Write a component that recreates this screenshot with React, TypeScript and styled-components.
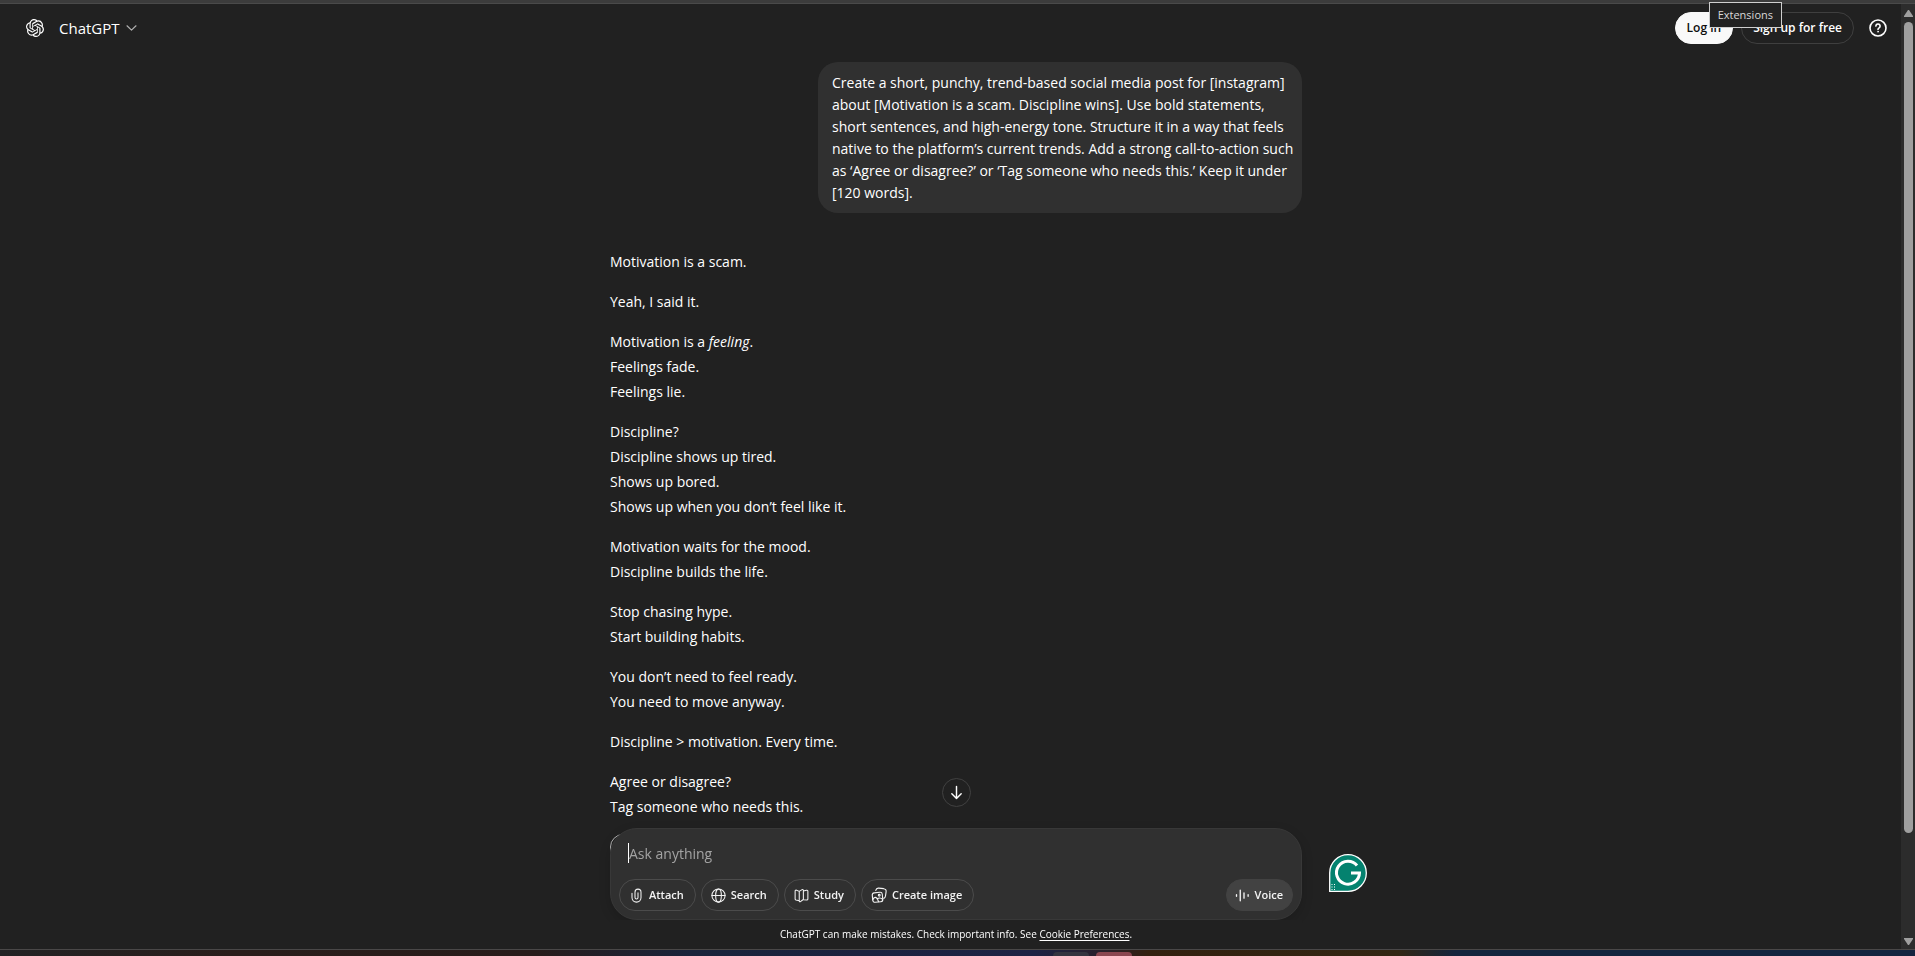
import React from "react";
import styled, { createGlobalStyle, css } from "styled-components";
import { SiOpenai } from "react-icons/si";

const GlobalStyle = createGlobalStyle`
  * { box-sizing: border-box; }
  body {
    margin: 0;
    background: #212121;
    color: #ffffff;
    font-family: "Open Sans", "Noto Sans", sans-serif;
    font-size: 14px;
  }
  button, input { font-family: inherit; color: inherit; }
`;

const Window = styled.div`
  display: flex;
  flex-direction: column;
  height: 100vh;
  overflow: hidden;
`;

const BrowserEdge = styled.div`
  flex: none;
  height: 4px;
  background: #3c3c3c;
  border-bottom: 1px solid #4a4a4a;
`;

const Page = styled.div`
  flex: 1;
  min-height: 0;
  display: flex;
`;

const Content = styled.div`
  flex: 1;
  min-width: 0;
  display: flex;
  flex-direction: column;
`;

const Header = styled.header`
  flex: none;
  display: flex;
  align-items: center;
  justify-content: space-between;
  height: 48px;
  padding: 0 13px 0 26px;
`;

const Brand = styled.div`
  display: flex;
  align-items: center;
  gap: 15px;
`;

const ModelButton = styled.button`
  display: flex;
  align-items: center;
  gap: 6px;
  padding: 0;
  border: 0;
  background: none;
  font-size: 15px;
  line-height: 20px;
`;

const HeaderActions = styled.div`
  display: flex;
  align-items: center;
  gap: 8px;
`;

const AccountButton = styled.button<{ $primary?: boolean }>`
  height: 32px;
  padding: 0 11px;
  border-radius: 16px;
  border: 1px solid ${(p) => (p.$primary ? "#f9f9f9" : "#3f3f3f")};
  background: ${(p) => (p.$primary ? "#f9f9f9" : "transparent")};
  color: ${(p) => (p.$primary ? "#0d0d0d" : "#ffffff")};
  font-size: 12px;
  font-weight: 600;
  line-height: 20px;
`;

const HelpButton = styled.button`
  display: flex;
  padding: 0;
  margin-left: 6px;
  border: 0;
  background: none;
`;

const Tooltip = styled.div`
  position: absolute;
  top: 2px;
  right: 133px;
  padding: 3px 8px;
  border: 1px solid #cfcfcf;
  background: #222222;
  color: #d8d8d8;
  font-size: 11px;
  line-height: 18px;
`;

const Scroller = styled.main`
  flex: 1;
  min-height: 0;
  overflow: hidden;
  padding-left: 11px;
`;

const Column = styled.div`
  width: 100%;
  max-width: 692px;
  margin: 0 auto;
`;

const Thread = styled(Column)`
  display: flex;
  flex-direction: column;
  padding: 10px 0 150px;
`;

const UserBubble = styled.p`
  align-self: flex-end;
  width: 484px;
  margin: 0;
  padding: 10px 8px 9px 14px;
  border-radius: 20px;
  background: #303030;
  line-height: 22px;
`;

const Reply = styled.article`
  display: flex;
  flex-direction: column;
  gap: 15px;
  margin-top: 36px;
`;

const Paragraph = styled.p`
  margin: 0;
  line-height: 25px;
  white-space: pre-line;
`;

const Sources = styled.span`
  width: 26px;
  height: 26px;
  border: 1px solid #b4b4b4;
  border-radius: 13px;
`;

const Dock = styled.footer`
  position: sticky;
  bottom: 0;
`;

const DockColumn = styled(Column)`
  position: relative;
  display: flex;
  flex-direction: column;
  align-items: center;
`;

const JumpButton = styled.button`
  display: flex;
  align-items: center;
  justify-content: center;
  width: 29px;
  height: 29px;
  margin-bottom: 21px;
  padding: 0;
  border: 1px solid #424242;
  border-radius: 50%;
  background: #212121;
`;

const Composer = styled.form`
  width: 100%;
  padding: 14px 8px 8px;
  border: 1px solid #383838;
  border-radius: 27px;
  background: #303030;
  box-shadow: 0 4px 12px rgba(0, 0, 0, 0.16);
`;

const Prompt = styled.input`
  display: block;
  width: calc(100% - 20px);
  height: 20px;
  margin: 0 10px 16px 9px;
  padding: 0;
  border: 0;
  border-left: 1px solid #ffffff;
  outline: 0;
  background: none;
  font-size: 14px;
  &::placeholder { color: #a3a3a3; opacity: 1; }
`;

const Tools = styled.div`
  display: flex;
  gap: 5px;
`;

const Chip = styled.button<{ $filled?: boolean }>`
  display: flex;
  align-items: center;
  gap: 5px;
  height: 32px;
  padding: 0 11px 0 9px;
  border: 1px solid #4b4b4b;
  border-radius: 16px;
  background: none;
  color: #f3f3f3;
  font-size: 11px;
  font-weight: 600;
  line-height: 14px;
  ${(p) =>
    p.$filled &&
    css`
      margin-left: auto;
      padding: 0 9px 0 8px;
      border-color: #424242;
      background: #424242;
    `}
`;

const Notice = styled.p`
  width: 100%;
  margin: 0;
  padding: 6px 0 7px;
  background: #212121;
  text-align: center;
  font-size: 10px;
  line-height: 16px;
  a { color: inherit; text-underline-offset: 2px; }
`;

const WritingBadge = styled.button`
  position: absolute;
  left: calc(100% + 27px);
  bottom: 57px;
  display: flex;
  padding: 0;
  border: 0;
  background: none;
`;

const Scrollbar = styled.div`
  flex: none;
  display: flex;
  flex-direction: column;
  align-items: center;
  width: 14px;
  padding: 6px 2px 4px 3px;
  gap: 5px;
  background: #2c2c2c;
`;

const Track = styled.div`
  flex: 1;
  width: 9px;
`;

const Thumb = styled.div`
  height: 89%;
  border-radius: 5px;
  background: #9f9f9f;
`;

const Taskbar = styled.div`
  flex: none;
  display: flex;
  gap: 7px;
  height: 7px;
  padding: 2px 0 0 55%;
  border-top: 1px solid #4a4848;
  background: linear-gradient(90deg, #222224 0%, #2a1d1b 12%, #281c1b 28%, #19233a 36%,
    #1d2244 54%, #2b2028 58%, #33200f 60%, #322613 73%, #14243c 76%, #14243f 100%);
`;

const TaskItem = styled.span<{ $color: string }>`
  width: 36px;
  border-radius: 4px 4px 0 0;
  background: ${(p) => p.$color};
`;

type IconProps = { size?: number; children: React.ReactNode; weight?: number };
const Icon = ({ size = 15, weight = 1.4, children }: IconProps) => (
  <svg width={size} height={size} viewBox="0 0 20 20" fill="none" stroke="currentColor"
    strokeWidth={weight} strokeLinecap="round" strokeLinejoin="round" aria-hidden="true">
    {children}
  </svg>
);

const paragraphs: React.ReactNode[] = [
  "Motivation is a scam.",
  "Yeah, I said it.",
  <>Motivation is a <em>feeling</em>.{"\nFeelings fade.\nFeelings lie."}</>,
  "Discipline?\nDiscipline shows up tired.\nShows up bored.\nShows up when you don’t feel like it.",
  "Motivation waits for the mood.\nDiscipline builds the life.",
  "Stop chasing hype.\nStart building habits.",
  "You don’t need to feel ready.\nYou need to move anyway.",
  "Discipline > motivation. Every time.",
  "Agree or disagree?\nTag someone who needs this.",
];

export default function App() {
  return (
    <Window>
      <GlobalStyle />
      <BrowserEdge />
      <Page>
        <Content>
          <Header>
            <Brand>
              <SiOpenai size={18} aria-label="OpenAI" />
              <ModelButton type="button">
                ChatGPT
                <svg width="11" height="6" viewBox="0 0 11 6" fill="none" stroke="#b0b0b0" strokeWidth="1.2" aria-hidden="true">
                  <path d="M1 .8 5.5 5.1 10 .8" strokeLinecap="round" strokeLinejoin="round" />
                </svg>
              </ModelButton>
            </Brand>
            <HeaderActions>
              <AccountButton type="button" $primary>Log in</AccountButton>
              <AccountButton type="button">Sign up for free</AccountButton>
              <HelpButton type="button" aria-label="Help">
                <Icon size={20} weight={1.6}>
                  <circle cx="10" cy="10" r="8" />
                  <path d="M7.9 8.1a2.1 2.1 0 1 1 3.2 1.8c-.7.4-1.1.8-1.1 1.5" />
                  <circle cx="10" cy="13.7" r=".5" fill="currentColor" strokeWidth=".7" />
                </Icon>
              </HelpButton>
            </HeaderActions>
          </Header>
          <Scroller>
            <Thread>
              <UserBubble>
                Create a short, punchy, trend-based social media post for [instagram] about
                [Motivation is a scam. Discipline wins]. Use bold statements, short sentences, and
                high-energy tone. Structure it in a way that feels native to the platform’s current
                trends. Add a strong call-to-action such as ‘Agree or disagree?’ or ‘Tag someone who
                needs this.’ Keep it under [120 words].
              </UserBubble>
              <Reply>
                {paragraphs.map((text, i) => (
                  <Paragraph key={i}>{text}</Paragraph>
                ))}
                <Sources />
              </Reply>
            </Thread>
            <Dock>
              <DockColumn>
                <JumpButton type="button" aria-label="Scroll to bottom">
                  <Icon size={17} weight={1.7}>
                    <path d="M10 3v14M4.500 11.500 10 17l5.500-5.500" />
                  </Icon>
                </JumpButton>
                <Composer onSubmit={(e) => e.preventDefault()}>
                  <Prompt type="text" aria-label="Message" placeholder="Ask anything" />
                  <Tools>
                    <Chip type="button">
                      <Icon>
                        <path d="M4 7v5.800a6 6 0 0 0 12 0V5.500a4 4 0 0 0-8 0v7.200a2 2 0 0 0 4 0V6.500" />
                      </Icon>
                      Attach
                    </Chip>
                    <Chip type="button">
                      <Icon>
                        <circle cx="10" cy="10" r="8.800" />
                        <ellipse cx="10" cy="10" rx="3.800" ry="8.800" />
                        <path d="M1.200 10h17.600" />
                      </Icon>
                      Search
                    </Chip>
                    <Chip type="button">
                      <Icon>
                        <path d="M7 4.500 10.800 2.200c.8-.5 1.700 0 1.700.9v11.400c0 .5-.2.900-.6 1.200l-3.300 2.500c-.7.5-1.600 0-1.600-.8V4.500ZM7 4.500 3.400 2.900C2.500 2.500 1.500 3 1.500 4v10.500c0 .7.4 1.200 1.100 1.400L7 17M12.500 4l4.200-1c1-.2 1.800.4 1.800 1.300v10.400c0 .7-.4 1.200-1.100 1.400l-4.900-.4" />
                      </Icon>
                      Study
                    </Chip>
                    <Chip type="button">
                      <Icon size={16}>
                        <path d="M6 4.200C6.400 2.200 7.600 1.200 9.600 1.400l6.200.7c2.200.3 3.400 1.500 3.100 3.600l-.8 5.500c-.2 1.500-.8 2.500-2.100 3" />
                        <path d="M4 7.300l7-.7c1.800-.2 2.900.7 3.100 2.400l.6 6.300c.2 1.800-.7 2.900-2.400 3.100l-7 .7c-1.700.2-2.800-.7-3-2.400l-.7-6.200c-.2-1.900.6-3 2.400-3.200Z" />
                        <circle cx="10.300" cy="10.300" r="1.100" />
                        <path d="M2.200 16c1.700-4.200 5.100-4.500 7.200 2.300M7.800 15c1.800-1.800 4.500-1.800 6.700.5" />
                      </Icon>
                      Create image
                    </Chip>
                    <Chip type="button" $filled>
                      <Icon weight={1.8}>
                        <path d="M2 9v2M7 3v14M12 6.500v7M17.500 9v2" />
                      </Icon>
                      Voice
                    </Chip>
                  </Tools>
                </Composer>
                <Notice>
                  ChatGPT can make mistakes. Check important info. See{" "}
                  <a href="#cookies">Cookie Preferences</a>.
                </Notice>
                <WritingBadge type="button" aria-label="Writing assistant">
                  <svg width="38" height="38" viewBox="0 0 38 38" fill="none" aria-hidden="true">
                    <path d="M.7 37.300V19A18.300 18.300 0 1 1 19 37.300Z" fill="#04826f" stroke="#fff" strokeWidth="1.300" />
                    <path d="M28 11.500A11.500 11.500 0 1 0 30.500 19H22" stroke="#fff" strokeWidth="3" />
                    <path d="M2.500 30.500h4M2.500 33h4M2.500 35.500h4" stroke="#fff" strokeWidth="1" strokeDasharray="1 1.500" />
                  </svg>
                </WritingBadge>
              </DockColumn>
            </Dock>
          </Scroller>
        </Content>
        <Scrollbar>
          <svg width="9" height="7" viewBox="0 0 9 7" fill="#9f9f9f" aria-hidden="true"><path d="M4 0h1l4 6v1H0V6Z" /></svg>
          <Track><Thumb /></Track>
          <svg width="9" height="7" viewBox="0 0 9 7" fill="#9f9f9f" aria-hidden="true"><path d="M0 0h9v1L5 7H4L0 1Z" /></svg>
        </Scrollbar>
      </Page>
      <Taskbar>
        <TaskItem $color="#34343f" />
        <TaskItem $color="#8b4650" />
      </Taskbar>
      <Tooltip role="tooltip">Extensions</Tooltip>
    </Window>
  );
}
